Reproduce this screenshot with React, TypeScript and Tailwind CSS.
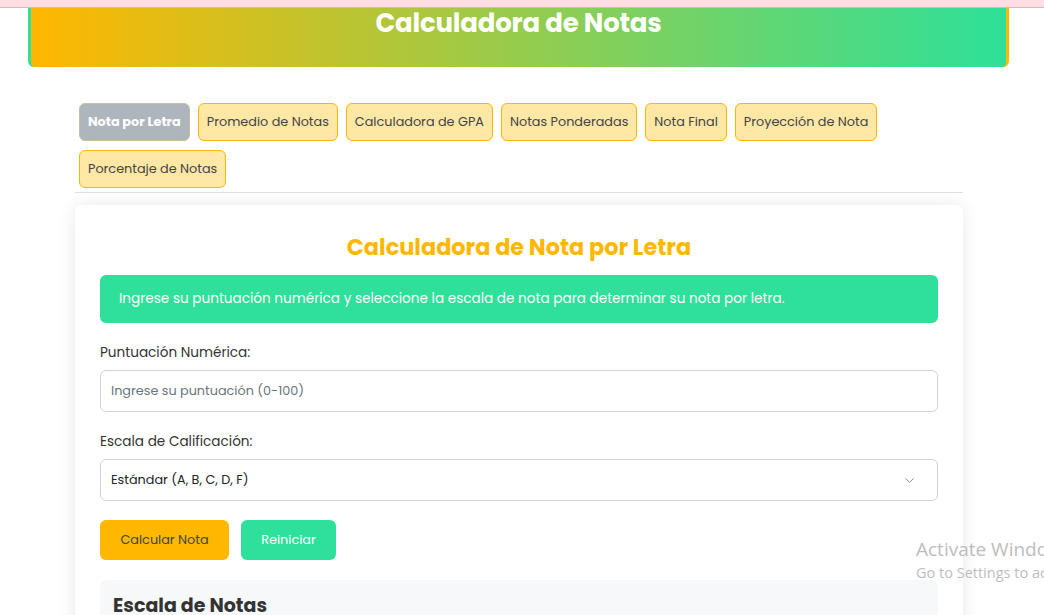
import React from 'react';
import { ChevronDown } from 'lucide-react';

const tabs = [
  'Nota por Letra',
  'Promedio de Notas',
  'Calculadora de GPA',
  'Notas Ponderadas',
  'Nota Final',
  'Proyección de Nota',
  'Porcentaje de Notas',
];

export default function App() {
  return (
    <div
      className="relative min-h-[615px] bg-white overflow-hidden text-[#333]"
      style={{ fontFamily: 'Poppins, Inter, "Noto Sans", sans-serif' }}
    >
      {/* Top strip */}
      <div className="h-[8px] bg-[#ffdee3] border-b border-[#d6b9be]" />

      {/* Header */}
      <header className="ml-[28px] w-[981px] h-[59px] rounded-b-md border-l-[3px] border-r-[3px] border-l-[#2ee09a] border-r-[#ffb700] bg-[linear-gradient(to_right,#ffb700,#2ee09a)] flex justify-center">
        <h1 className="text-white font-bold text-[26px] leading-none pt-[2px] tracking-[-0.2px]">
          Calculadora de Notas
        </h1>
      </header>

      {/* Tabs */}
      <nav className="ml-[75px] w-[888px] mt-[36px] px-1 pb-[4px] border-b border-[#dee2e6] flex flex-wrap gap-x-[8px] gap-y-[9px]">
        {tabs.map((tab, i) =>
          i === 0 ? (
            <button
              key={tab}
              className="h-[38px] px-[8px] rounded-md border border-[#c8bf9c] bg-[#adb5bd] text-white font-bold text-[12.8px]"
            >
              {tab}
            </button>
          ) : (
            <button
              key={tab}
              className="h-[38px] px-[8px] rounded-md border border-[#ffb700] bg-[#ffe7a6] text-[#444] text-[12.8px]"
            >
              {tab}
            </button>
          )
        )}
      </nav>

      {/* Card */}
      <main className="ml-[75px] w-[888px] mt-[12px] bg-white rounded-md shadow-[0_0_18px_rgba(0,0,0,0.09)] px-[25px] pt-[25px] pb-6">
        <h2 className="text-center text-[#ffb700] font-bold text-[22.4px] leading-[34px] mb-[11px]">
          Calculadora de Nota por Letra
        </h2>

        <div className="h-[48px] rounded-md bg-[#2ee09a] text-white text-[13.6px] flex items-center px-[19px] mb-[19px]">
          Ingrese su puntuación numérica y seleccione la escala de nota para determinar su nota por letra.
        </div>

        <label className="block text-[13.6px] leading-[21px] text-[#333] mb-[7px]">
          Puntuación Numérica:
        </label>
        <input
          className="block w-full h-[42px] rounded-md border border-[#ced4da] px-[10px] text-[12.8px] placeholder:text-[#6c757d] mb-[19px] outline-none"
          placeholder="Ingrese su puntuación (0-100)"
        />

        <label className="block text-[13.6px] leading-[21px] text-[#333] mb-[7px]">
          Escala de Calificación:
        </label>
        <div className="h-[42px] rounded-md border border-[#ced4da] px-[10px] flex items-center justify-between text-[12.8px] text-[#212529] mb-[19px]">
          <span>Estándar (A, B, C, D, F)</span>
          <ChevronDown size={15} strokeWidth={1.5} className="text-[#888] mr-[10px]" />
        </div>

        <div className="flex gap-[12px] mb-[20px]">
          <button className="h-[40px] w-[129px] rounded-md bg-[#ffb700] text-[#444] text-[12.8px]">
            Calcular Nota
          </button>
          <button className="h-[40px] w-[95px] rounded-md bg-[#2ee09a] text-white text-[12.8px]">
            Reiniciar
          </button>
        </div>

        <section className="rounded-md bg-[#f7f8fa] px-[13px] pt-[14px] pb-10">
          <h3 className="text-[19px] font-bold text-[#333] leading-[24px]">Escala de Notas</h3>
        </section>
      </main>

      {/* Windows activation watermark */}
      <div
        className="absolute left-[916px] top-[537px] text-[#bdbdbd] whitespace-nowrap pointer-events-none"
        style={{ fontFamily: '"Open Sans", "Noto Sans", sans-serif' }}
      >
        <div className="text-[19px] leading-[24px]">Activate Windows</div>
        <div className="text-[14.5px] leading-[20px] mt-[2px]">Go to Settings to activate Windows.</div>
      </div>
    </div>
  );
}
